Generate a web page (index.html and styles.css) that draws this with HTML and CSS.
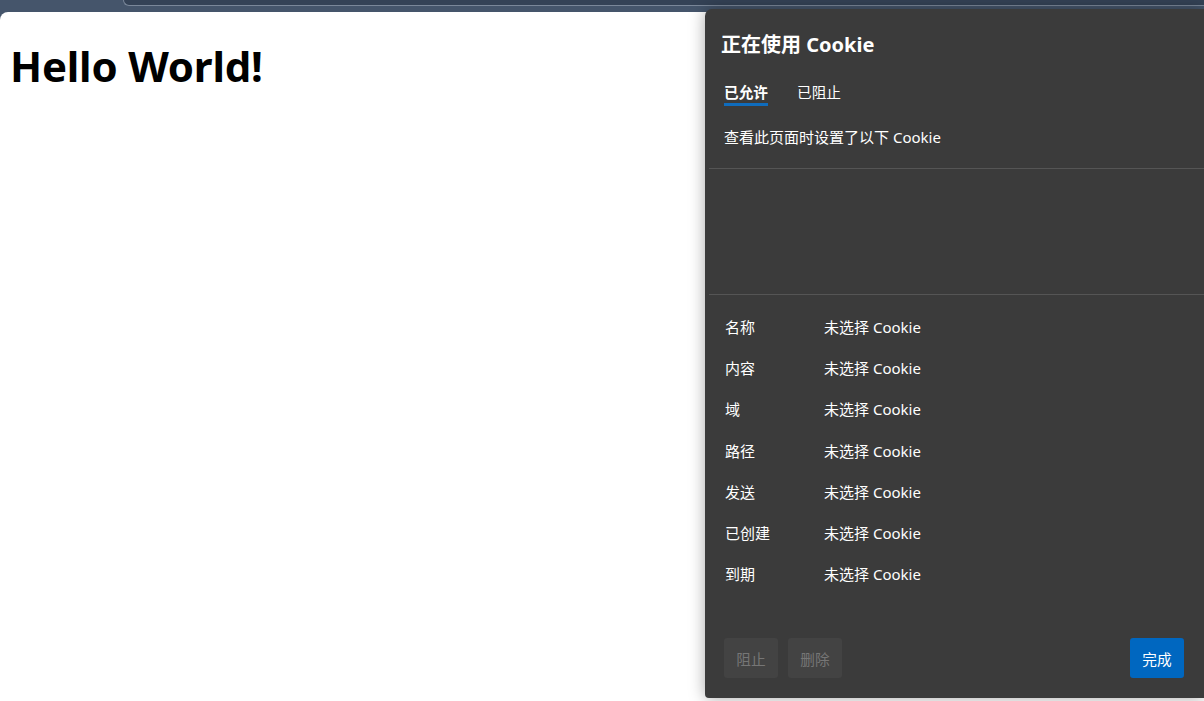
FILE: index.html
```html
<!DOCTYPE html>
<html lang="zh-CN">
<head>
<meta charset="utf-8">
<title>Hello World</title>
<link rel="stylesheet" href="styles.css">
</head>
<body>
<div class="chrome">
  <div class="tabstrip"></div>
</div>
<main class="page">
  <h1>Hello World!</h1>
</main>

<section class="cookies">
  <h2 class="title">正在使用 Cookie</h2>
  <div class="tabs">
    <span class="tab active">已允许</span>
    <span class="tab">已阻止</span>
  </div>
  <p class="hint">查看此页面时设置了以下 Cookie</p>
  <div class="tree"></div>
  <dl class="details">
    <div class="row"><dt>名称</dt><dd>未选择 Cookie</dd></div>
    <div class="row"><dt>内容</dt><dd>未选择 Cookie</dd></div>
    <div class="row"><dt>域</dt><dd>未选择 Cookie</dd></div>
    <div class="row"><dt>路径</dt><dd>未选择 Cookie</dd></div>
    <div class="row"><dt>发送</dt><dd>未选择 Cookie</dd></div>
    <div class="row"><dt>已创建</dt><dd>未选择 Cookie</dd></div>
    <div class="row"><dt>到期</dt><dd>未选择 Cookie</dd></div>
  </dl>
  <div class="actions">
    <button class="btn" disabled>阻止</button>
    <button class="btn" disabled>删除</button>
    <button class="btn primary">完成</button>
  </div>
</section>
</body>
</html>
```

FILE: styles.css
```css
html, body {
  margin: 0;
  padding: 0;
  height: 100%;
  overflow: hidden;
}
body {
  background: #45556b;
  font-family: "Noto Sans", "Noto Sans CJK SC", sans-serif;
}

.chrome {
  height: 12px;
  position: relative;
}
.tabstrip {
  margin-left: 123px;
  height: 5px;
  background: #344256;
  border-bottom: 1px solid #7a8799;
  border-left: 1px solid #7a8799;
  border-bottom-left-radius: 8px;
}

.page {
  background: #fff;
  height: 689px;
  border-top-left-radius: 8px;
  padding: 1px 10px 0;
}
.page h1 {
  margin: 26px 0 0;
  font-size: 42px;
  font-weight: bold;
  line-height: 54px;
  color: #000;
  letter-spacing: -0.2px;
}

/* cookie dialog */
.cookies {
  position: absolute;
  left: 705px;
  top: 9px;
  width: 499px;
  height: 689px;
  background: #3b3b3b;
  color: #fff;
  border-top-left-radius: 7px;
  border-bottom-left-radius: 4px;
  box-shadow: 0 0 16px rgba(0,0,0,0.35);
  display: flex;
  flex-direction: column;
  font-size: 15px;
}
.title {
  margin: 0;
  padding: 22px 0 0 16px;
  font-size: 20px;
  font-weight: bold;
  line-height: 28px;
}
.tabs {
  display: flex;
  gap: 29px;
  padding: 23px 0 0 19px;
  font-size: 14.67px;
}
.tab {
  line-height: 20px;
  padding-bottom: 1px;
  border-bottom: 3px solid transparent;
}
.tab.active {
  font-weight: bold;
  border-color: #0f6cbd;
}
.hint {
  margin: 0;
  padding: 21px 0 0 19px;
  line-height: 20px;
}
.tree {
  margin: 21px 0 0 4px;
  height: 125px;
  border-top: 1px solid #555;
  border-bottom: 1px solid #555;
}
.details {
  margin: 22px 0 0;
  padding: 0 0 0 20px;
}
.row {
  display: flex;
  height: 41.2px;
  align-items: flex-start;
}
.row dt {
  width: 99px;
  line-height: 20px;
}
.row dd {
  margin: 0;
  line-height: 20px;
}
.actions {
  margin-top: auto;
  display: flex;
  gap: 10px;
  padding: 0 20px 20px 19px;
}
.btn {
  width: 54px;
  height: 40px;
  border: none;
  border-radius: 3px;
  font-family: inherit;
  font-size: 14.67px;
  background: #434343;
  color: #767676;
  padding: 0;
}
.btn.primary {
  margin-left: auto;
  background: #0067c0;
  color: #fff;
}
```
